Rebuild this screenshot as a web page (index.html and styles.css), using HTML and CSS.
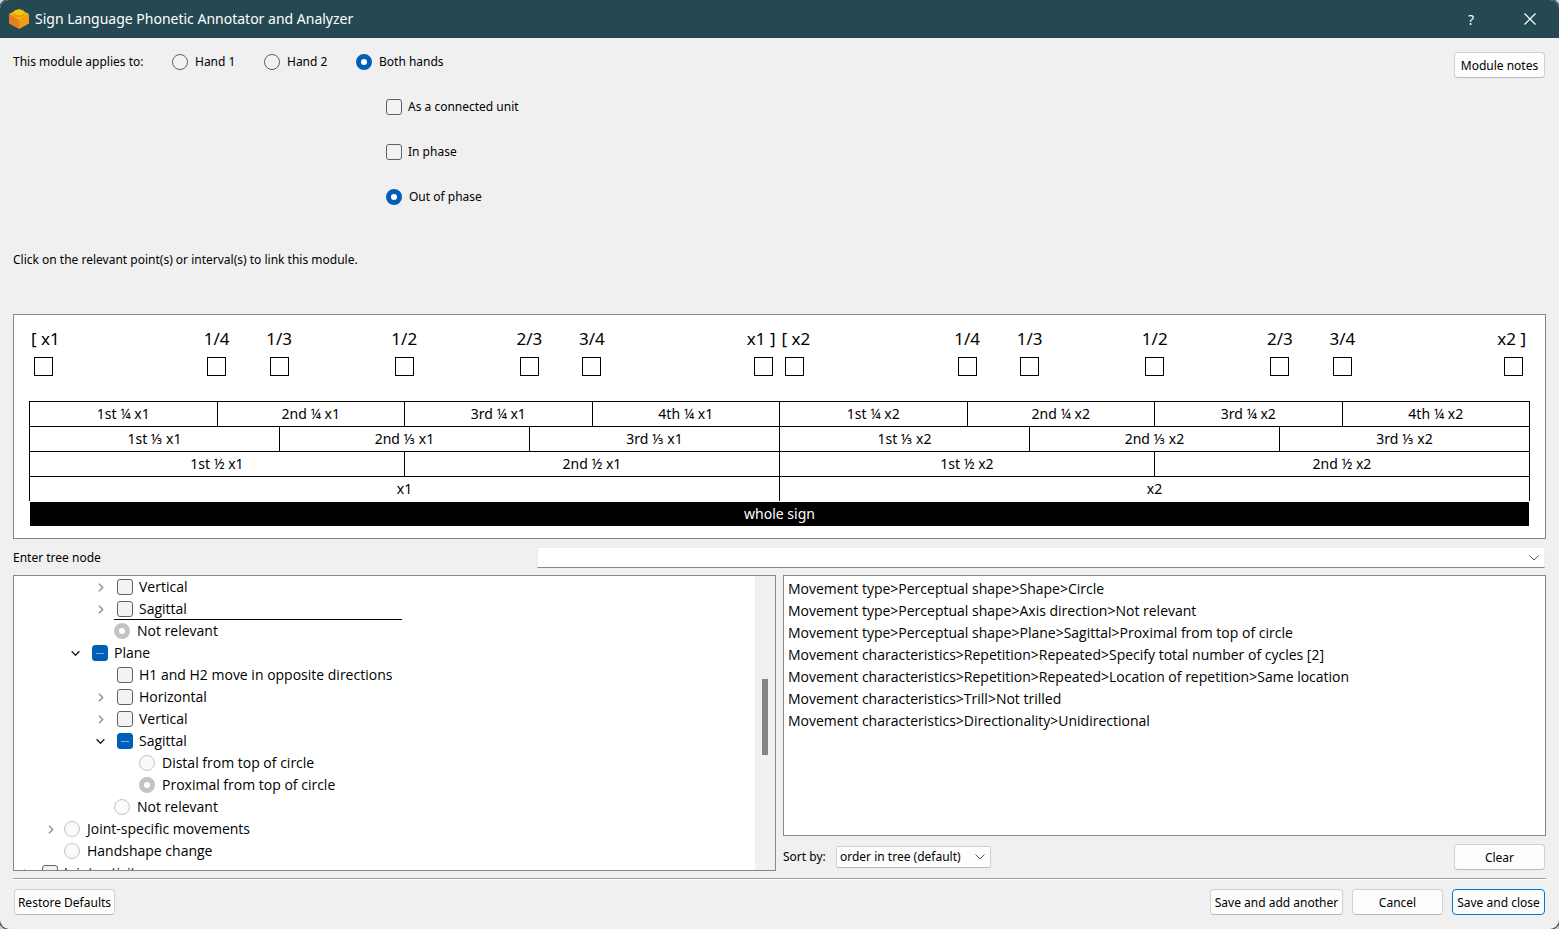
FILE: index.html
```html
<!DOCTYPE html>
<html lang="en">
<head>
<meta charset="utf-8">
<title>Sign Language Phonetic Annotator and Analyzer</title>
<link rel="stylesheet" href="styles.css">
</head>
<body>
<div class="window">
  <header class="titlebar">
    <svg class="logo" viewBox="0 0 20 20" aria-hidden="true">
      <path d="M0 5v9.500l10 5.500V9.500z" fill="#e67e22"/>
      <path d="M20 5v9.500l-10 5.500V9.500z" fill="#f39c12"/>
      <path d="M10 0l10 5-10 5.500L0 5z" fill="#f1b90f"/>
      <path d="M4.500 3.500v2c0 1.700 2.500 2.700 5.500 2.700s5.500-1 5.500-2.700v-2z" fill="#e8950f"/>
      <ellipse cx="10" cy="3.300" rx="5.500" ry="2.900" fill="#f1c40f"/>
    </svg>
    <h1 class="title">Sign Language Phonetic Annotator and Analyzer</h1>
    <button class="caption-button" type="button" aria-label="Help">?</button>
    <button class="caption-button" type="button" aria-label="Close">
      <svg width="12" height="12" viewBox="0 0 12 12"><path d="M.5.5l11 11M11.500.5l-11 11" stroke="#fff" stroke-width="1.200"/></svg>
    </button>
  </header>

  <main class="content">
    <section class="applies">
      <div class="hands" role="group" aria-labelledby="hands-label">
        <span class="hands-label" id="hands-label">This module applies to:</span>
        <label class="option hand"><input class="radio" type="radio" name="hand">Hand 1</label>
        <label class="option hand"><input class="radio" type="radio" name="hand">Hand 2</label>
        <div class="both">
          <label class="option"><input class="radio" type="radio" name="hand" checked>Both hands</label>
          <div class="phases">
            <label class="option tight"><input class="check" type="checkbox">As a connected unit</label>
            <label class="option tight"><input class="check" type="checkbox">In phase</label>
            <label class="option"><input class="radio" type="radio" name="phase" checked>Out of phase</label>
          </div>
        </div>
      </div>
      <button class="button notes" type="button">Module notes</button>
    </section>

    <p class="hint">Click on the relevant point(s) or interval(s) to link this module.</p>

    <section class="timing">
      <div class="points">
        <div class="points-half">
          <label class="point first">[ x1<input class="box" type="checkbox"></label>
          <label class="point q1">1/4<input class="box" type="checkbox"></label>
          <label class="point t1">1/3<input class="box" type="checkbox"></label>
          <label class="point h1">1/2<input class="box" type="checkbox"></label>
          <label class="point t2">2/3<input class="box" type="checkbox"></label>
          <label class="point q3">3/4<input class="box" type="checkbox"></label>
          <label class="point last">x1 ]<input class="box" type="checkbox"></label>
        </div>
        <div class="points-half">
          <label class="point first">[ x2<input class="box" type="checkbox"></label>
          <label class="point q1">1/4<input class="box" type="checkbox"></label>
          <label class="point t1">1/3<input class="box" type="checkbox"></label>
          <label class="point h1">1/2<input class="box" type="checkbox"></label>
          <label class="point t2">2/3<input class="box" type="checkbox"></label>
          <label class="point q3">3/4<input class="box" type="checkbox"></label>
          <label class="point last">x2 ]<input class="box" type="checkbox"></label>
        </div>
      </div>
      <table class="intervals">
        <colgroup><col span="24"></colgroup>
        <tr><td colspan="3">1st ¼ x1</td><td colspan="3">2nd ¼ x1</td><td colspan="3">3rd ¼ x1</td><td colspan="3">4th ¼ x1</td><td colspan="3">1st ¼ x2</td><td colspan="3">2nd ¼ x2</td><td colspan="3">3rd ¼ x2</td><td colspan="3">4th ¼ x2</td></tr>
        <tr><td colspan="4">1st ⅓ x1</td><td colspan="4">2nd ⅓ x1</td><td colspan="4">3rd ⅓ x1</td><td colspan="4">1st ⅓ x2</td><td colspan="4">2nd ⅓ x2</td><td colspan="4">3rd ⅓ x2</td></tr>
        <tr><td colspan="6">1st ½ x1</td><td colspan="6">2nd ½ x1</td><td colspan="6">1st ½ x2</td><td colspan="6">2nd ½ x2</td></tr>
        <tr><td colspan="12">x1</td><td colspan="12">x2</td></tr>
      </table>
      <div class="whole">whole sign</div>
    </section>

    <div class="search">
      <label for="node">Enter tree node</label>
      <div class="combo">
        <input class="combo-input" id="node" type="text">
        <svg class="combo-arrow" width="10" height="6" viewBox="0 0 10 6"><path d="M.5.5L5 5 9.500.5" fill="none" stroke="#555"/></svg>
      </div>
    </div>

    <section class="panes">
      <div class="tree">
        <ul class="nodes">
          <li class="node l4"><svg class="twist"><use href="#closed"/></svg><label class="item"><input class="check" type="checkbox">Vertical</label></li>
          <li class="node l4"><svg class="twist"><use href="#closed"/></svg><label class="item ruled"><input class="check" type="checkbox">Sagittal</label></li>
          <li class="node l4"><span class="twist"></span><label class="item rad"><input class="radio muted" type="radio" name="axis" checked>Not relevant</label></li>
          <li class="node l3"><svg class="twist"><use href="#open"/></svg><label class="item"><input class="check mixed" type="checkbox">Plane</label></li>
          <li class="node l4"><span class="twist"></span><label class="item"><input class="check" type="checkbox">H1 and H2 move in opposite directions</label></li>
          <li class="node l4"><svg class="twist"><use href="#closed"/></svg><label class="item"><input class="check" type="checkbox">Horizontal</label></li>
          <li class="node l4"><svg class="twist"><use href="#closed"/></svg><label class="item"><input class="check" type="checkbox">Vertical</label></li>
          <li class="node l4"><svg class="twist"><use href="#open"/></svg><label class="item"><input class="check mixed" type="checkbox">Sagittal</label></li>
          <li class="node l5"><span class="twist"></span><label class="item rad"><input class="radio muted" type="radio" name="sagittal">Distal from top of circle</label></li>
          <li class="node l5"><span class="twist"></span><label class="item rad"><input class="radio muted" type="radio" name="sagittal" checked>Proximal from top of circle</label></li>
          <li class="node l4"><span class="twist"></span><label class="item rad"><input class="radio muted" type="radio" name="plane">Not relevant</label></li>
          <li class="node l2"><svg class="twist"><use href="#closed"/></svg><label class="item rad"><input class="radio muted" type="radio" name="type">Joint-specific movements</label></li>
          <li class="node l2"><span class="twist"></span><label class="item rad"><input class="radio muted" type="radio" name="type">Handshape change</label></li>
          <li class="node l1"><svg class="twist"><use href="#closed"/></svg><label class="item"><input class="check" type="checkbox">Joint activity</label></li>
        </ul>
        <div class="scrollbar"><div class="thumb"></div></div>
      </div>

      <div class="side">
        <ul class="paths">
          <li>Movement type&gt;Perceptual shape&gt;Shape&gt;Circle</li>
          <li>Movement type&gt;Perceptual shape&gt;Axis direction&gt;Not relevant</li>
          <li>Movement type&gt;Perceptual shape&gt;Plane&gt;Sagittal&gt;Proximal from top of circle</li>
          <li>Movement characteristics&gt;Repetition&gt;Repeated&gt;Specify total number of cycles [2]</li>
          <li>Movement characteristics&gt;Repetition&gt;Repeated&gt;Location of repetition&gt;Same location</li>
          <li>Movement characteristics&gt;Trill&gt;Not trilled</li>
          <li>Movement characteristics&gt;Directionality&gt;Unidirectional</li>
        </ul>
        <div class="sort">
          <label class="sort-label" for="sort">Sort by:</label>
          <div class="combo">
            <select class="select" id="sort"><option>order in tree (default)</option></select>
            <svg class="combo-arrow" width="10" height="6" viewBox="0 0 10 6"><path d="M.5.5L5 5 9.500.5" fill="none" stroke="#555"/></svg>
          </div>
          <button class="button clear" type="button">Clear</button>
        </div>
      </div>
    </section>

    <footer class="actions">
      <button class="button restore" type="button">Restore Defaults</button>
      <button class="button another" type="button">Save and add another</button>
      <button class="button" type="button">Cancel</button>
      <button class="button primary" type="button">Save and close</button>
    </footer>
  </main>
</div>
<svg class="symbols" aria-hidden="true">
  <symbol id="closed" viewBox="0 0 10 10"><path d="M3.500 1.500L7 5 3.500 8.500" fill="none" stroke="#8a8a8a" stroke-width="1.200"/></symbol>
  <symbol id="open" viewBox="0 0 10 10"><path d="M1.500 3L5 6.500 8.500 3" fill="none" stroke="#222" stroke-width="1.300"/></symbol>
</svg>
</body>
</html>
```
FILE: styles.css
```css
* { box-sizing: border-box; }
body {
  margin: 0;
  background: #c9cfd1;
  color: #000;
  font: 12px/16px "Noto Sans", "Open Sans", sans-serif;
}
button, input, select { font: inherit; color: inherit; margin: 0; }
ul { list-style: none; margin: 0; padding: 0; }
.symbols { position: absolute; width: 0; height: 0; }

.window {
  display: flex;
  flex-direction: column;
  height: 100vh;
  background: #f0f0f0;
  border-radius: 9px;
  box-shadow: 0 0 0 1px #244952;
  overflow: hidden;
}

/* Title bar */
.titlebar {
  display: flex;
  align-items: center;
  flex: none;
  height: 38px;
  padding-left: 9px;
  background: #244952;
  color: #fff;
}
.logo { width: 20px; height: 20px; margin-right: 6px; }
.title { flex: 1; margin: 0; font: 14px/20px "Noto Sans", "Open Sans", sans-serif; }
.caption-button {
  width: 58px;
  height: 38px;
  padding: 2px 0 0;
  border: 0;
  background: none;
  font-size: 14px;
}
.caption-button:last-child { width: 59px; }

.content {
  display: flex;
  flex-direction: column;
  flex: 1;
  min-height: 0;
  padding: 14px 13px 14px;
}

/* Hand selection */
.applies { display: flex; justify-content: space-between; align-items: flex-start; }
.hands { display: flex; }
.hands-label { width: 159px; line-height: 20px; }
.option { display: flex; align-items: center; gap: 7px; height: 19px; }
.option.hand { width: 92px; }
.option.tight { gap: 6px; }
.phases { display: grid; gap: 26px; padding: 26px 0 0 30px; }
.notes { margin-right: 1px; }

.radio, .check {
  appearance: none;
  flex: none;
  width: 16px;
  height: 16px;
  border: 1px solid #606060;
  background: #f3f3f3;
}
.radio { border-radius: 50%; }
.radio:checked { border: 5px solid #005fb8; background: #fff; }
.radio.muted { border-color: #c3c3c3; background: #fafafa; }
.radio.muted:checked { background: #fff; }
.check { border-radius: 3px; }
.check.mixed {
  border-color: #005fb8;
  background: linear-gradient(#7fafdb, #7fafdb) center / 8px 1px no-repeat #005fb8;
}

.button {
  min-width: 91px;
  height: 26px;
  padding: 2px 2px 0;
  border: 1px solid #d0d0d0;
  border-bottom-color: #bababa;
  border-radius: 4px;
  background: #fdfdfd;
  white-space: nowrap;
}
.button.primary { min-width: 93px; border-color: #0078d4; }

.hint { margin: 46px 0; line-height: 16px; }

/* Timing chart */
.timing {
  flex: none;
  padding: 12px 15px;
  border: 1px solid #828790;
  background: #fff;
  font-size: 14px;
}
.points { display: grid; grid-template-columns: 1fr 1fr; height: 74px; }
.points-half { display: grid; grid-template-columns: repeat(24, 1fr); align-items: start; }
.point {
  display: flex;
  flex-direction: column;
  align-items: center;
  gap: 6px;
  grid-row: 1;
  font-size: 17px;
  line-height: 24px;
  white-space: pre;
}
.first { grid-column: 1 / 4; align-items: flex-start; padding-left: 2px; }
.q1 { grid-column: 6 / 8; }
.t1 { grid-column: 8 / 10; }
.h1 { grid-column: 12 / 14; }
.t2 { grid-column: 16 / 18; }
.q3 { grid-column: 18 / 20; }
.last { grid-column: 22 / 25; align-items: flex-end; padding-right: 4px; }
.first .box, .last .box { margin: 0 3px; }
.box {
  appearance: none;
  width: 19px;
  height: 19px;
  border: 1px solid #000;
  background: #fff;
}
.intervals {
  width: 100%;
  table-layout: fixed;
  border-spacing: 0;
  border-left: 1px solid #000;
  line-height: 24px;
  text-align: center;
}
.intervals td {
  height: 25px;
  padding: 0;
  border-top: 1px solid #000;
  border-right: 1px solid #000;
}
.whole {
  margin: 1px 1px 0;
  background: #000;
  color: #fff;
  line-height: 24px;
  text-align: center;
}

/* Tree search */
.search {
  display: grid;
  grid-template-columns: 1fr 2fr;
  gap: 20px;
  align-items: center;
  flex: none;
  padding: 8px 1px 7px 0;
}
.combo { position: relative; display: flex; }
.combo-input {
  flex: 1;
  height: 21px;
  padding: 0 24px 0 4px;
  border: 1px solid #ececec;
  border-bottom-color: #868686;
  background: #fff;
}
.combo-arrow { position: absolute; right: 6px; top: 8px; pointer-events: none; }

/* Tree and selected paths */
.panes {
  display: grid;
  grid-template-columns: 1fr 1fr;
  grid-template-rows: minmax(0, 1fr);
  gap: 7px;
  flex: 1;
  min-height: 0;
  font-size: 14px;
}
.tree {
  display: flex;
  border: 1px solid #828790;
  background: #fff;
  overflow: hidden;
}
.nodes { flex: 1; font-family: "Open Sans", sans-serif; }
.node { display: flex; align-items: center; height: 22px; }
.l1 { padding-left: 6px; }
.l2 { padding-left: 31px; }
.l3 { padding-left: 56px; }
.l4 { padding-left: 81px; }
.l5 { padding-left: 106px; }
.twist { flex: none; width: 11px; height: 11px; margin-right: 8px; }
.item { display: flex; align-items: center; gap: 6px; height: 22px; padding-left: 3px; white-space: nowrap; }
.item.rad { gap: 7px; padding-left: 0; }
.item.ruled { width: 288px; border-bottom: 1px solid #000; }
.scrollbar { display: flex; justify-content: center; width: 20px; background: #f0f0f0; }
.thumb { width: 6px; height: 76px; margin-top: 103px; background: #858585; }

.side { display: flex; flex-direction: column; min-height: 0; }
.paths {
  flex: 1;
  padding: 2px 4px;
  border: 1px solid #828790;
  background: #fff;
  font-family: "Open Sans", sans-serif;
  line-height: 22px;
}
.sort { display: flex; align-items: center; padding: 8px 1px 1px 0; font-size: 12px; }
.sort-label { width: 53px; }
.select {
  appearance: none;
  width: 155px;
  height: 22px;
  padding: 0 3px;
  border: 1px solid #d0d0d0;
  border-bottom-color: #bababa;
  border-radius: 2px;
  background: #fdfdfd;
}
.clear { margin-left: auto; }

/* Dialog buttons */
.actions {
  display: flex;
  gap: 9px;
  flex: none;
  margin-top: 7px;
  padding: 10px 1px 0;
  border-top: 1px solid #a0a0a0;
  box-shadow: inset 0 1px #fff;
}
.restore { min-width: 101px; margin-right: auto; }
.another { min-width: 133px; }
```
